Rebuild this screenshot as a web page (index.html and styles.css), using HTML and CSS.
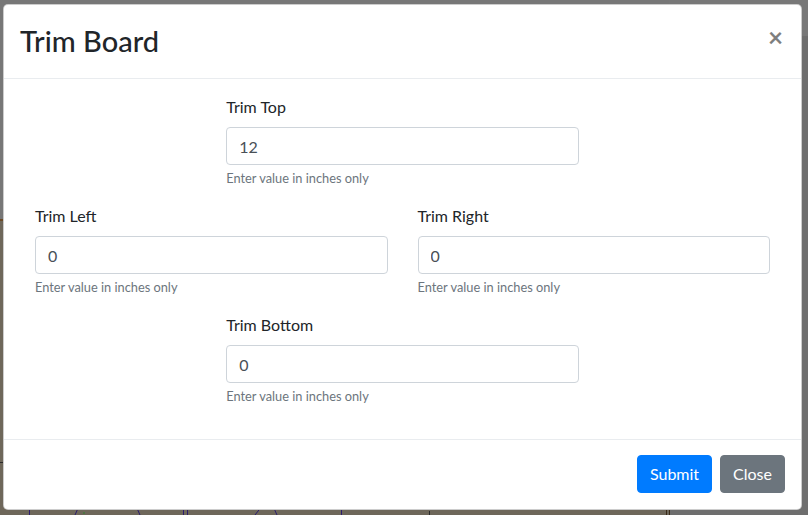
FILE: index.html
```html
<!DOCTYPE html>
<html>
<head>
<meta charset="utf-8">
<link rel="stylesheet" href="styles.css">
</head>
<body>
<div class="page">
  <svg class="page-art" width="808" height="515" viewBox="0 0 808 515">
    <rect x="0" y="0" width="808" height="515" fill="#777777"/>
    <rect x="0" y="220" width="669" height="295" fill="#6e675a"/>
    <rect x="0" y="219" width="669" height="2" fill="#6b4a26"/>
    <rect x="669" y="0" width="139" height="515" fill="#6e6e6e"/>
    <rect x="669" y="0" width="139" height="36" fill="#787878"/>
    <line x1="666.5" y1="505" x2="666.5" y2="515" stroke="#3a2a18" stroke-width="1"/>
    <line x1="669.5" y1="505" x2="669.5" y2="515" stroke="#3a2a18" stroke-width="1"/>
    <line x1="0" y1="462.5" x2="3" y2="462.5" stroke="#2a2a2a"/>
    <g stroke="#2c1d6e" stroke-width="1" fill="none">
      <line x1="29.5" y1="507" x2="29.5" y2="515"/>
      <line x1="79" y1="506" x2="75" y2="515"/>
      <line x1="136" y1="506" x2="140" y2="515"/>
      <line x1="183.5" y1="506" x2="183.5" y2="515"/>
      <line x1="187.5" y1="506" x2="187.5" y2="515"/>
      <line x1="262" y1="506" x2="255" y2="515"/>
      <line x1="273" y1="506" x2="277" y2="515"/>
      <line x1="341.5" y1="506" x2="341.5" y2="515"/>
    </g>
    <line x1="429.5" y1="511" x2="429.5" y2="515" stroke="#2a2a2a"/>
    <circle cx="84" cy="513" r="0.8" fill="#2a8a2a"/>
  </svg>
</div>

<div class="modal">
  <div class="modal-header">
    <h3 class="modal-title">Trim Board</h3>
    <button class="close" type="button">&times;</button>
  </div>
  <div class="modal-body">
    <div class="field-row centered">
      <div class="field">
        <label>Trim Top</label>
        <input class="form-control" type="text" value="12">
        <small class="form-text">Enter value in inches only</small>
      </div>
    </div>
    <div class="field-row">
      <div class="field">
        <label>Trim Left</label>
        <input class="form-control" type="text" value="0">
        <small class="form-text">Enter value in inches only</small>
      </div>
      <div class="field">
        <label>Trim Right</label>
        <input class="form-control" type="text" value="0">
        <small class="form-text">Enter value in inches only</small>
      </div>
    </div>
    <div class="field-row centered">
      <div class="field">
        <label>Trim Bottom</label>
        <input class="form-control" type="text" value="0">
        <small class="form-text">Enter value in inches only</small>
      </div>
    </div>
  </div>
  <div class="modal-footer">
    <button class="btn btn-primary" type="button">Submit</button>
    <button class="btn btn-secondary" type="button">Close</button>
  </div>
</div>
</body>
</html>
```
FILE: styles.css
```css
* { box-sizing: border-box; }
html, body {
  margin: 0;
  padding: 0;
  width: 808px;
  height: 515px;
  overflow: hidden;
}
body {
  font-family: "Lato", "Open Sans", sans-serif;
  font-size: 16px;
  line-height: 1.5;
  color: #212529;
  background: #777777;
}
.page { position: relative; width: 808px; height: 515px; }
.page-art { display: block; }

.modal {
  position: absolute;
  left: 3px;
  top: 4px;
  width: 799px;
  background: #fff;
  border: 1px solid rgba(0,0,0,.2);
  border-radius: 5px;
  display: flex;
  flex-direction: column;
}
.modal-header {
  display: flex;
  align-items: flex-start;
  justify-content: space-between;
  padding: 15px 16px 16px;
  border-bottom: 1px solid #e9ecef;
}
.modal-title {
  margin: 0;
  font-size: 29px;
  font-weight: 500;
  line-height: 42px;
  color: #212529;
}
.close {
  padding: 16px;
  margin: -12px -14px -16px auto;
  background: transparent;
  border: 0;
  font-family: "Lato", sans-serif;
  font-size: 26px;
  font-weight: 700;
  line-height: 1;
  color: #000;
  opacity: .5;
  text-shadow: 0 1px 0 #fff;
}
.modal-body { padding: 16px; }
.field-row { display: flex; }
.field-row.centered { justify-content: center; }
.field {
  width: 50%;
  padding: 0 15px;
  margin-bottom: 16px;
}
label {
  display: block;
  margin-bottom: 8px;
  line-height: 24px;
}
.form-control {
  display: block;
  width: 100%;
  height: 38px;
  padding: 6px 12px;
  font-family: inherit;
  font-size: 16px;
  line-height: 1.5;
  color: #495057;
  background: #fff;
  border: 1px solid #ced4da;
  border-radius: 4px;
}
.form-text {
  display: block;
  margin-top: 4px;
  font-size: 12.8px;
  line-height: 19.2px;
  color: #6c757d;
}
.modal-footer {
  display: flex;
  justify-content: flex-end;
  align-items: center;
  padding: 11px 12px 12px;
  border-top: 1px solid #e9ecef;
}
.btn {
  margin: 4px;
  height: 38px;
  padding: 6px 12px;
  font-family: inherit;
  font-size: 16px;
  line-height: 1.5;
  border: 1px solid transparent;
  border-radius: 4px;
  color: #fff;
}
.btn-primary { background: #007bff; border-color: #007bff; }
.btn-secondary { background: #6c757d; border-color: #6c757d; }
```
